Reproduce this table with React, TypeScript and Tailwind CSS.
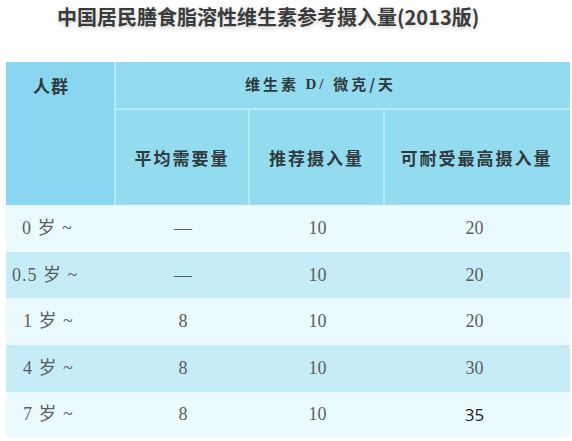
import React from 'react';

const cjk = '"Noto Sans CJK SC", "Noto Sans", sans-serif';
const serif = '"Liberation Serif", "Noto Sans CJK SC", serif';

const rows = [
    { age: '0 岁 ~', ear: '—', rni: '10', ul: '20', labelPad: 'pl-[16px]' },
    { age: '0.5 岁 ~', ear: '—', rni: '10', ul: '20', labelPad: 'pl-[6px]' },
    { age: '1 岁 ~', ear: '8', rni: '10', ul: '20', labelPad: 'pl-[17px]' },
    { age: '4 岁 ~', ear: '8', rni: '10', ul: '30', labelPad: 'pl-[17px]' },
    { age: '7 岁 ~', ear: '8', rni: '10', ul: '35', labelPad: 'pl-[17px]' },
];

export default function App() {
    return (
        <div className="w-[572px] h-[441px] bg-white overflow-hidden">
            {/* Title */}
            <div className="h-[62px] pt-[3px]">
                <h1
                    className="ml-[57px] text-[20px] leading-[28px] font-bold text-[#3b3b3b] whitespace-nowrap [text-shadow:0_2px_4px_rgba(0,0,0,0.18)]"
                    style={{ fontFamily: cjk }}
                >
                    中国居民膳食脂溶性维生素参考摄入量(2013版)
                </h1>
            </div>

            {/* Table */}
            <div className="ml-[6px] w-[564px]">
                {/* Header */}
                <div className="grid grid-cols-[110px_134px_135px_185px] grid-rows-[48px_95px] bg-[#93dcf0] text-[#2f3a3e]" style={{ fontFamily: cjk }}>
                    <div className="row-span-2 bg-[#88d6ef] border-r-2 border-[#b3e8f5] pl-[27px] pt-[11px] text-[17px] font-bold tracking-[1px]">
                        人群
                    </div>
                    <div className="col-span-3 border-b-2 border-[#b8eaf6] pl-[129px] flex items-center text-[15px] font-bold tracking-[3px] pb-[2px] whitespace-pre">
                        {'维生素 '}
                        <span className="font-bold" style={{ fontFamily: serif }}>{'D/ '}</span>
                        微克/天
                    </div>
                    <div className="flex items-center justify-center text-[17px] font-bold tracking-[2px] border-r-2 border-[#b3e8f5]">
                        平均需要量
                    </div>
                    <div className="flex items-center justify-center text-[17px] font-bold tracking-[2px] border-r-2 border-[#b3e8f5]">
                        推荐摄入量
                    </div>
                    <div className="flex items-center justify-center text-[17px] font-bold tracking-[2px] pr-[2px]">
                        可耐受最高摄入量
                    </div>
                </div>

                {/* Body */}
                {rows.map((r, i) => (
                    <div
                        key={r.age}
                        className={`grid grid-cols-[110px_134px_135px_185px] ${i === 4 ? 'h-[45px]' : i === 1 ? 'h-[46px]' : 'h-[47px]'} ${i % 2 === 1 ? 'bg-[#c5ecf7]' : 'bg-[#ebfafd]'} text-[#5a5e60] text-[18px]`}
                        style={{ fontFamily: serif }}
                    >
                        <div className={`flex items-center ${r.labelPad} tracking-[1px]`}>{r.age}</div>
                        <div className="flex items-center justify-center">{r.ear}</div>
                        <div className="flex items-center justify-center">{r.rni}</div>
                        <div className="flex items-center justify-center pr-[6px]">
                            {r.ul === '35' ? (
                                <span className="text-[#222] text-[17px]" style={{ fontFamily: '"Open Sans", sans-serif' }}>35</span>
                            ) : (
                                r.ul
                            )}
                        </div>
                    </div>
                ))}
            </div>
        </div>
    );
}
